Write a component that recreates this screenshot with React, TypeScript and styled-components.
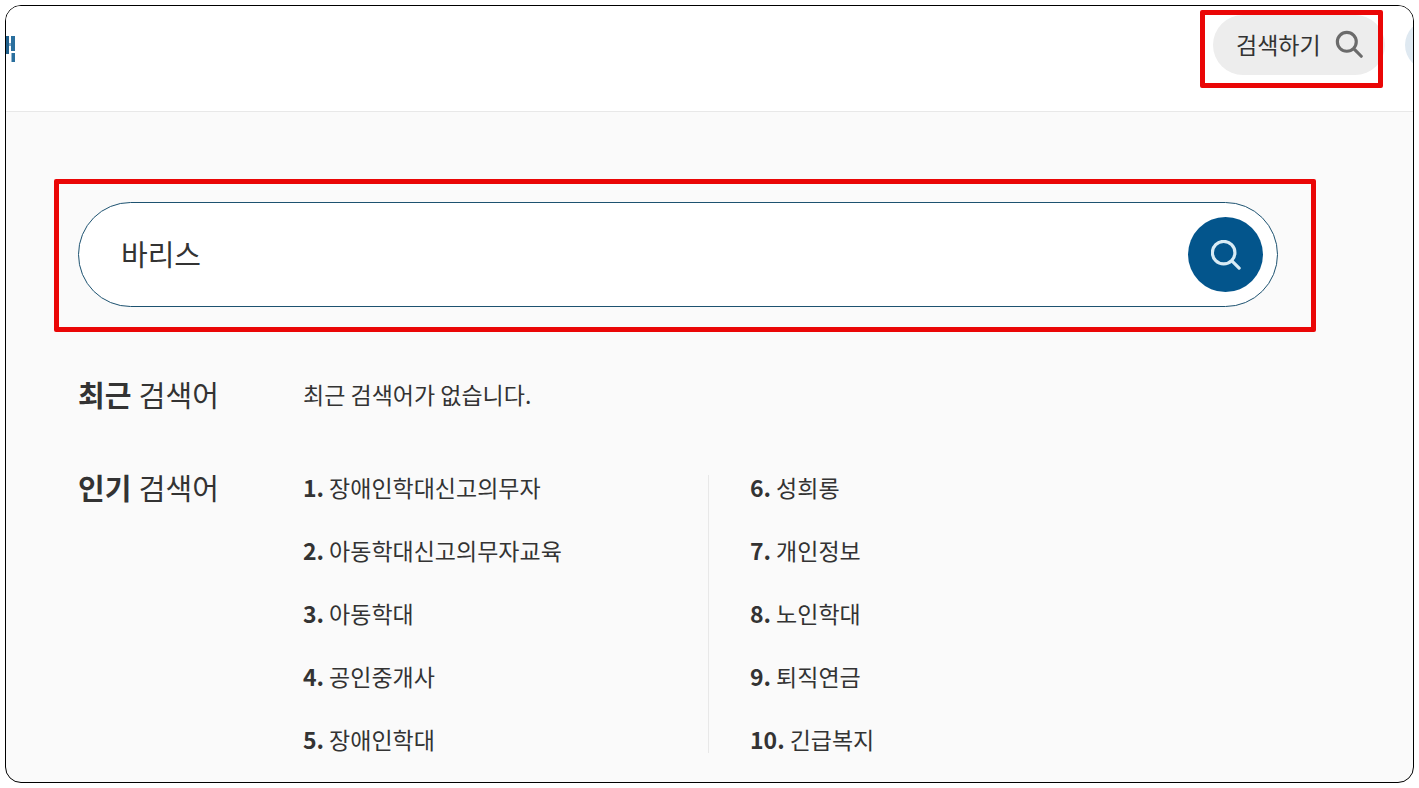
import styled, { createGlobalStyle } from 'styled-components';

const GlobalStyle = createGlobalStyle`
  html, body {
    margin: 0;
    padding: 0;
    background: #fff;
  }
  * {
    box-sizing: border-box;
  }
  body {
    font-family: 'Noto Sans CJK KR', 'Noto Sans', sans-serif;
    color: #333;
  }
`;

const Page = styled.div`
  width: 1419px;
  height: 788px;
  padding: 5px;
  overflow: hidden;
  position: relative;
`;

const Frame = styled.div`
  width: 1409px;
  height: 778px;
  border: 1px solid #000;
  border-radius: 16px;
  overflow: hidden;
  background: #fafafa;
  display: flex;
  flex-direction: column;
`;

const Header = styled.header`
  height: 106px;
  flex-shrink: 0;
  background: #fff;
  border-bottom: 1px solid #e8e8e8;
  display: flex;
  align-items: center;
  justify-content: space-between;
  padding-bottom: 27px;
`;

const LogoMark = styled.svg`
  width: 10px;
  height: 27px;
  display: block;
  margin-top: 8px;
  filter: blur(0.5px);
`;

const HeaderRight = styled.div`
  display: flex;
  align-items: center;
  gap: 20px;
  margin-right: -42px;
`;

const SearchPill = styled.button`
  width: 172px;
  height: 60px;
  border: 0;
  border-radius: 30px;
  background: #ededed;
  color: #333;
  font: inherit;
  font-size: 23px;
  display: flex;
  align-items: center;
  justify-content: space-between;
  padding: 0 22px 3px 23px;
`;

const Avatar = styled.div`
  width: 50px;
  height: 50px;
  border-radius: 50%;
  background: #dfe9f1;
`;

const Content = styled.main`
  flex: 1;
  padding: 90px 0 0 72px;
`;

const SearchBox = styled.div`
  width: 1200px;
  height: 105px;
  border: 1px solid #1d5270;
  border-radius: 53px;
  background: #fff;
  display: flex;
  align-items: center;
  justify-content: space-between;
  padding: 0 14px 0 42px;
`;

const SearchText = styled.span`
  font-size: 29px;
  color: #333;
  padding-bottom: 4px;
`;

const SearchButton = styled.button`
  width: 75px;
  height: 75px;
  border: 0;
  border-radius: 50%;
  background: #03558c;
  display: flex;
  align-items: center;
  justify-content: center;
  padding: 0;
`;

const KeywordRow = styled.section<{ $top: number }>`
  display: grid;
  grid-template-columns: 225px 1fr;
  margin-top: ${(p) => p.$top}px;
`;

const RowTitle = styled.h2`
  margin: 0;
  font-size: 29px;
  font-weight: 400;
  line-height: 42px;
  color: #333;

  b {
    font-weight: 700;
    margin-right: 1px;
  }
`;

const EmptyText = styled.p`
  margin: 0;
  font-size: 23px;
  line-height: 42px;
`;

const RankColumns = styled.div`
  display: grid;
  grid-template-columns: 405px 1fr;
  padding-top: 9px;
`;

const RankList = styled.ol<{ $divider?: boolean }>`
  list-style: none;
  margin: 0;
  padding: 0 0 0 ${(p) => (p.$divider ? 41 : 0)}px;
  height: 278px;
  border-left: ${(p) => (p.$divider ? '1px solid #e8e8e8' : '0')};
  display: flex;
  flex-direction: column;
  gap: 21px;
`;

const RankItem = styled.li`
  font-size: 23px;
  line-height: 42px;
  color: #333;
  white-space: nowrap;

  &:first-child {
    margin-top: -9px;
  }

  b {
    font-weight: 700;
    margin-right: 5px;
  }
`;

const Highlight = styled.div`
  position: absolute;
  border: 5px solid #ea0606;
  border-radius: 2px;
  pointer-events: none;
`;

const HeaderHighlight = styled(Highlight)`
  left: 1200px;
  top: 10px;
  width: 183px;
  height: 78px;
`;

const SearchHighlight = styled(Highlight)`
  left: 54px;
  top: 179px;
  width: 1262px;
  height: 153px;
`;

function SearchIcon({ size, color, width, r }: { size: number; color: string; width: number; r: number }) {
  return (
    <svg width={size} height={size} viewBox="0 0 32 32" fill="none">
      <circle cx="13.5" cy="13.5" r={r} stroke={color} strokeWidth={width} />
      <path d="M22.5 22.5l7.5 7.5" stroke={color} strokeWidth={width} strokeLinecap="round" />
    </svg>
  );
}

const leftRanks = ['장애인학대신고의무자', '아동학대신고의무자교육', '아동학대', '공인중개사', '장애인학대'];
const rightRanks = ['성희롱', '개인정보', '노인학대', '퇴직연금', '긴급복지'];

export default function App() {
  return (
    <>
      <GlobalStyle />
      <Page>
        <Frame>
          <Header>
            <LogoMark viewBox="0 0 10 27">
              <rect x="0" y="0" width="3" height="18" fill="#1f5f8b" />
              <rect x="5" y="0" width="4" height="15" fill="#2a6f9e" />
              <rect x="3" y="7" width="2" height="3" fill="#7fa9c6" />
              <rect x="5.5" y="17" width="3.5" height="9" fill="#2a6f9e" />
            </LogoMark>
            <HeaderRight>
              <SearchPill>
                검색하기
                <SearchIcon size={28} color="#6b6b6b" width={3.6} r={10.8} />
              </SearchPill>
              <Avatar />
            </HeaderRight>
          </Header>
          <Content>
            <SearchBox>
              <SearchText>바리스</SearchText>
              <SearchButton>
                <SearchIcon size={30} color="#d8ebf5" width={3.4} r={12} />
              </SearchButton>
            </SearchBox>
            <KeywordRow $top={66}>
              <RowTitle>
                <b>최근</b> 검색어
              </RowTitle>
              <EmptyText>최근 검색어가 없습니다.</EmptyText>
            </KeywordRow>
            <KeywordRow $top={51}>
              <RowTitle>
                <b>인기</b> 검색어
              </RowTitle>
              <RankColumns>
                <RankList>
                  {leftRanks.map((name, i) => (
                    <RankItem key={name}>
                      <b>{i + 1}.</b>
                      {name}
                    </RankItem>
                  ))}
                </RankList>
                <RankList $divider>
                  {rightRanks.map((name, i) => (
                    <RankItem key={name}>
                      <b>{i + 6}.</b>
                      {name}
                    </RankItem>
                  ))}
                </RankList>
              </RankColumns>
            </KeywordRow>
          </Content>
        </Frame>
        <HeaderHighlight />
        <SearchHighlight />
      </Page>
    </>
  );
}
